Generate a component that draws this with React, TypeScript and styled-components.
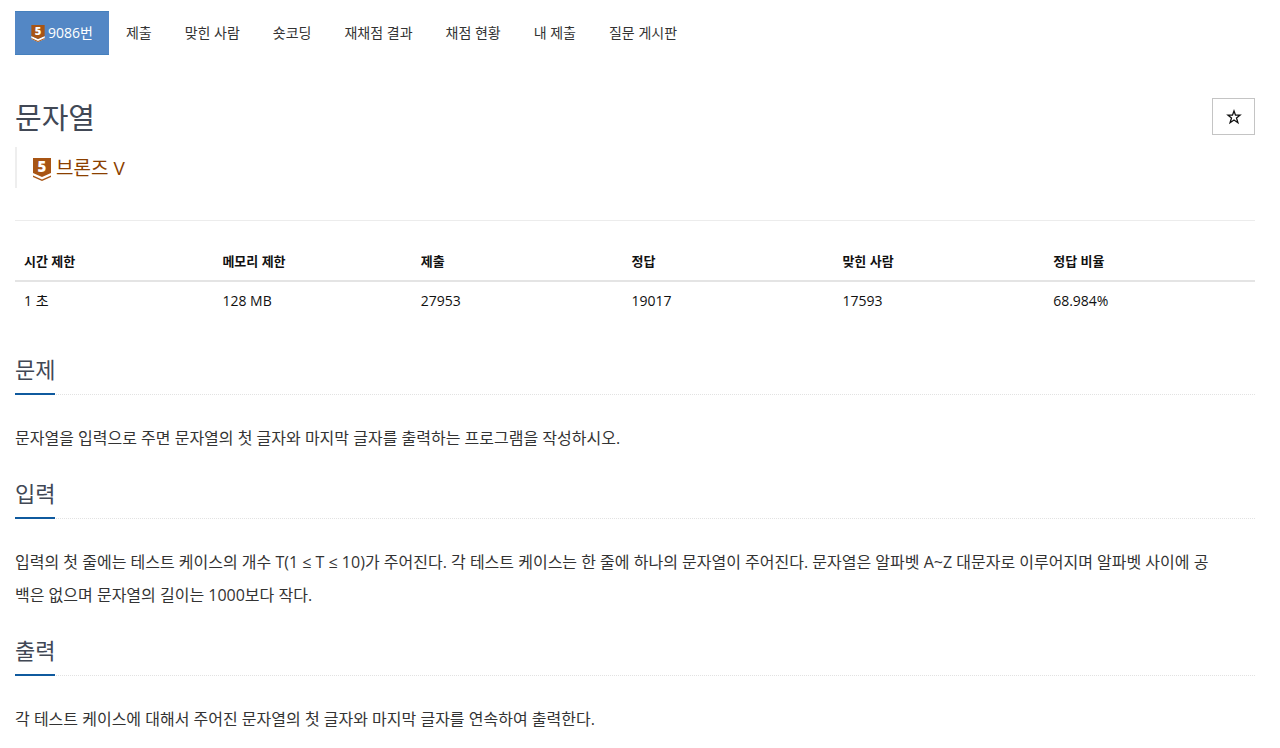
import React from "react";
import styled, { createGlobalStyle } from "styled-components";

const GlobalStyle = createGlobalStyle`
  * { box-sizing: border-box; }
  body {
    margin: 0;
    background: #fff;
    color: #333;
    font-family: "Open Sans", "Noto Sans CJK KR", sans-serif;
    font-size: 14px;
    line-height: 20px;
  }
`;

const Page = styled.main`
  padding: 11px 25px 12px 15px;
`;

const Tabs = styled.nav`
  display: flex;
  flex-wrap: wrap;
  gap: 1px;
`;

const Tab = styled.a<{ $active?: boolean }>`
  display: flex;
  align-items: center;
  gap: 3px;
  height: 44px;
  padding: 0 16px;
  text-decoration: none;
  color: ${(p) => (p.$active ? "#fff" : "#333")};
  background: ${(p) => (p.$active ? "#5387c5" : "transparent")};
  border: solid ${(p) => (p.$active ? "#4580bd" : "transparent")};
  border-width: 1px 0;
`;

const TitleRow = styled.header`
  display: flex;
  justify-content: space-between;
  align-items: flex-start;
  margin-top: 43px;
`;

const Title = styled.h1`
  margin: 0;
  font-size: 29px;
  line-height: 40px;
  font-weight: 400;
  color: #414855;
`;

const StarButton = styled.button`
  display: flex;
  align-items: center;
  justify-content: center;
  width: 43px;
  height: 37px;
  padding: 0;
  background: #fff;
  border: 1px solid #c4c4c4;
  color: #111;
`;

const Tier = styled.blockquote`
  display: flex;
  align-items: center;
  gap: 5px;
  margin: 9px 0 0;
  height: 41px;
  padding-left: 16px;
  border-left: 2px solid #eee;
  font-size: 19px;
  line-height: 28px;
  color: #8b3f00;

  svg {
    margin-top: 3px;
  }
`;

const Rule = styled.hr`
  margin: 32px 0 0;
  border: 0;
  border-top: 1px solid #ececec;
`;

const Stats = styled.table`
  width: 100%;
  margin-top: 21px;
  table-layout: fixed;
  border-collapse: collapse;
  color: #111;
`;

const HeadCell = styled.th<{ $share: number }>`
  width: ${(p) => p.$share}%;
  padding: 9px;
  text-align: left;
  font-size: 13px;
  font-weight: 700;
  border-bottom: 2px solid #e4e4e4;
`;

const Cell = styled.td`
  padding: 9px;
`;

const Section = styled.section<{ $first?: boolean }>`
  margin-top: ${(p) => (p.$first ? 29 : 18)}px;
`;

const Headline = styled.div`
  display: flex;
  border-bottom: 1px dotted #e2e2e2;
`;

const SectionTitle = styled.h2`
  margin: 0 0 -1px;
  padding-bottom: 4px;
  font-size: 22px;
  line-height: 40px;
  font-weight: 400;
  color: #414855;
  border-bottom: 2px solid #0f5a9e;
`;

const Text = styled.p`
  margin: 27px 0 0;
  font-size: 16px;
  line-height: 33px;
  color: #333;
`;

const BadgeIcon = styled.svg`
  flex: none;
  overflow: visible;
`;

const BadgeDigit = styled.text`
  font-family: "Open Sans", sans-serif;
  font-size: 15px;
  font-weight: 800;
  fill: #fff;
`;

const Badge = ({ width, height }: { width: number; height: number }) => (
  <BadgeIcon width={width} height={height} viewBox="0 0 18 23" aria-hidden="true">
    <path d="M0 15L9 19L18 15V19L9 23L0 19Z" fill="#fff" />
    <path d="M0 0H18V15L9 19L0 15Z" fill="#a85514" />
    <path d="M0 17.500L9 21.500L18 17.500V19L9 23L0 19Z" fill="#a85514" />
    <BadgeDigit x="9" y="14" textAnchor="middle">
      5
    </BadgeDigit>
  </BadgeIcon>
);

const Star = () => (
  <svg width="16" height="16" viewBox="0 0 16 16" aria-hidden="true">
    <path
      d="M8 2L9.500 6.200H14L10.500 9L11.900 13.700L8 11L4.100 13.700L5.500 9L2 6.200H6.500Z"
      fill="none"
      stroke="currentColor"
      strokeWidth="1.300"
    />
  </svg>
);

const tabs = ["제출", "맞힌 사람", "숏코딩", "재채점 결과", "채점 현황", "내 제출", "질문 게시판"];

const stats = [
  { label: "시간 제한", value: "1 초", share: 16 },
  { label: "메모리 제한", value: "128 MB", share: 16 },
  { label: "제출", value: "27953", share: 17 },
  { label: "정답", value: "19017", share: 17 },
  { label: "맞힌 사람", value: "17593", share: 17 },
  { label: "정답 비율", value: "68.984%", share: 17 },
];

export default function App() {
  return (
    <>
      <GlobalStyle />
      <Page lang="ko">
        <Tabs>
          <Tab href="#problem" $active>
            <Badge width={14} height={17} />
            9086번
          </Tab>
          {tabs.map((t) => (
            <Tab href="#" key={t}>
              {t}
            </Tab>
          ))}
        </Tabs>
        <TitleRow>
          <Title>문자열</Title>
          <StarButton type="button" aria-label="즐겨찾기">
            <Star />
          </StarButton>
        </TitleRow>
        <Tier>
          <Badge width={18} height={23} />
          브론즈 V
        </Tier>
        <Rule />
        <Stats>
          <thead>
            <tr>
              {stats.map((s) => (
                <HeadCell key={s.label} $share={s.share}>
                  {s.label}
                </HeadCell>
              ))}
            </tr>
          </thead>
          <tbody>
            <tr>
              {stats.map((s) => (
                <Cell key={s.label}>{s.value}</Cell>
              ))}
            </tr>
          </tbody>
        </Stats>
        <Section $first id="problem">
          <Headline>
            <SectionTitle>문제</SectionTitle>
          </Headline>
          <Text>문자열을 입력으로 주면 문자열의 첫 글자와 마지막 글자를 출력하는 프로그램을 작성하시오.</Text>
        </Section>
        <Section>
          <Headline>
            <SectionTitle>입력</SectionTitle>
          </Headline>
          <Text>
            입력의 첫 줄에는 테스트 케이스의 개수 T(1 ≤ T ≤ 10)가 주어진다. 각 테스트 케이스는 한 줄에 하나의 문자열이
            주어진다. 문자열은 알파벳 A~Z 대문자로 이루어지며 알파벳 사이에 공<br />
            백은 없으며 문자열의 길이는 1000보다 작다.
          </Text>
        </Section>
        <Section>
          <Headline>
            <SectionTitle>출력</SectionTitle>
          </Headline>
          <Text>각 테스트 케이스에 대해서 주어진 문자열의 첫 글자와 마지막 글자를 연속하여 출력한다.</Text>
        </Section>
      </Page>
    </>
  );
}
